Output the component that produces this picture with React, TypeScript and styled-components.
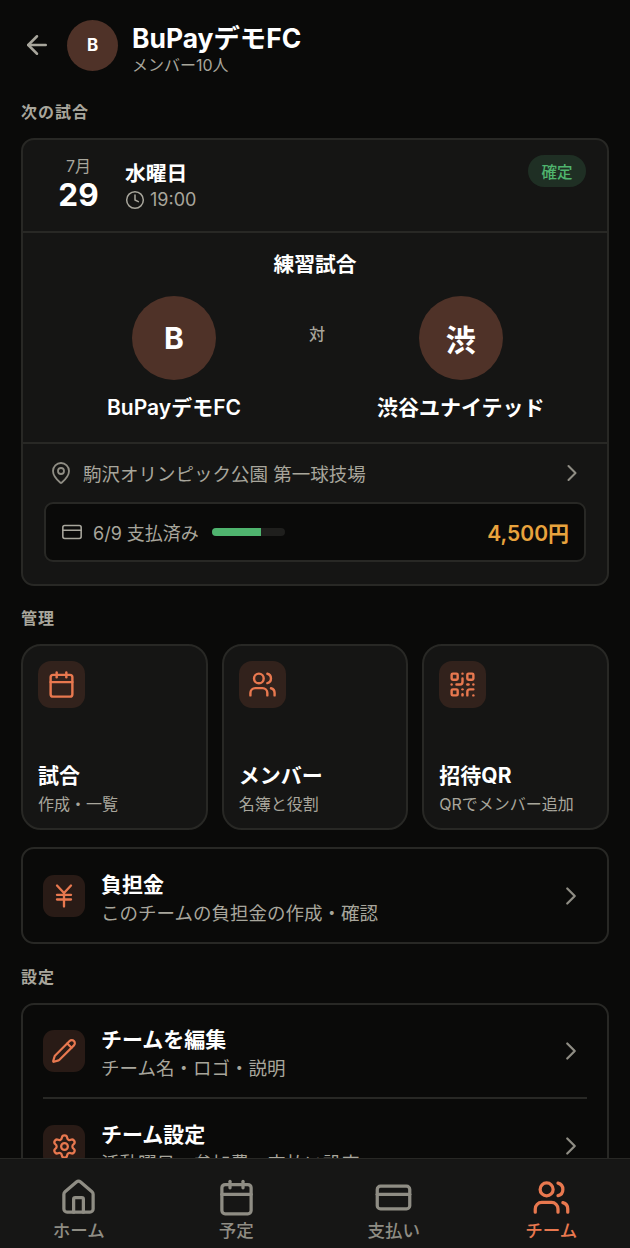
import React from "react";
import styled, { createGlobalStyle } from "styled-components";
import {
  ArrowLeft,
  Calendar,
  ChevronRight,
  Clock,
  CreditCard,
  House,
  JapaneseYen,
  MapPin,
  Pencil,
  QrCode,
  Settings,
  Users,
} from "lucide-react";

const GlobalStyle = createGlobalStyle`
  html, body {
    margin: 0;
    padding: 0;
    background: #0a0a09;
  }
  * {
    box-sizing: border-box;
  }
  body {
    font-family: Inter, "Noto Sans CJK JP", sans-serif;
  }
`;

const tiles = [
  { icon: Calendar, title: "試合", sub: "作成・一覧" },
  { icon: Users, title: "メンバー", sub: "名簿と役割" },
  { icon: QrCode, title: "招待QR", sub: "QRでメンバー追加" },
];

const navItems = [
  { icon: House, label: "ホーム" },
  { icon: Calendar, label: "予定" },
  { icon: CreditCard, label: "支払い" },
  { icon: Users, label: "チーム", active: true },
];

function App() {
  return (
    <Page>
      <GlobalStyle />
      <Scroll>
        <Header>
          <BackIcon>
            <ArrowLeft size={30} strokeWidth={2} />
          </BackIcon>
          <HeaderAvatar>B</HeaderAvatar>
          <HeaderText>
            <TeamName>BuPayデモFC</TeamName>
            <TeamMeta>メンバー10人</TeamMeta>
          </HeaderText>
        </Header>

        <SectionLabel>次の試合</SectionLabel>
        <MatchCard>
          <MatchTop>
            <DateBlock>
              <Month>7月</Month>
              <Day>29</Day>
            </DateBlock>
            <MatchWhen>
              <Weekday>水曜日</Weekday>
              <Time>
                <Clock size={20} strokeWidth={1.8} />
                19:00
              </Time>
            </MatchWhen>
            <Badge>確定</Badge>
          </MatchTop>
          <MatchMiddle>
            <MatchTitle>練習試合</MatchTitle>
            <Teams>
              <Team>
                <TeamAvatar>B</TeamAvatar>
                <TeamLabel>BuPayデモFC</TeamLabel>
              </Team>
              <Versus>対</Versus>
              <Team>
                <TeamAvatar>渋</TeamAvatar>
                <TeamLabel>渋谷ユナイテッド</TeamLabel>
              </Team>
            </Teams>
          </MatchMiddle>
          <MatchBottom>
            <Venue>
              <MapPin size={24} strokeWidth={1.8} />
              <VenueName>駒沢オリンピック公園 第一球技場</VenueName>
              <ChevronRight size={28} strokeWidth={1.8} />
            </Venue>
            <PayBox>
              <CreditCard size={22} strokeWidth={1.7} />
              <PayText>6/9 支払済み</PayText>
              <Progress>
                <ProgressFill style={{ width: `${(6 / 9) * 100}%` }} />
              </Progress>
              <Amount>4,500円</Amount>
            </PayBox>
          </MatchBottom>
        </MatchCard>

        <SectionLabel>管理</SectionLabel>
        <TileGrid>
          {tiles.map((t) => (
            <Tile key={t.title}>
              <TileIcon>
                <t.icon size={29} strokeWidth={2} />
              </TileIcon>
              <TileTitle>{t.title}</TileTitle>
              <TileSub>{t.sub}</TileSub>
            </Tile>
          ))}
        </TileGrid>

        <FeeCard>
          <RowIcon>
            <JapaneseYen size={28} strokeWidth={2} />
          </RowIcon>
          <RowText>
            <RowTitle>負担金</RowTitle>
            <RowSub>このチームの負担金の作成・確認</RowSub>
          </RowText>
          <RowChevron>
            <ChevronRight size={30} strokeWidth={1.8} />
          </RowChevron>
        </FeeCard>

        <SectionLabel>設定</SectionLabel>
        <SettingsCard>
          <SettingsRow>
            <RowIcon>
              <Pencil size={26} strokeWidth={2} />
            </RowIcon>
            <RowText>
              <RowTitle>チームを編集</RowTitle>
              <RowSub>チーム名・ロゴ・説明</RowSub>
            </RowText>
            <RowChevron>
              <ChevronRight size={30} strokeWidth={1.8} />
            </RowChevron>
          </SettingsRow>
          <SettingsRow>
            <RowIcon>
              <Settings size={27} strokeWidth={2} />
            </RowIcon>
            <RowText>
              <RowTitle>チーム設定</RowTitle>
              <RowSub>活動曜日・参加費・支払い設定</RowSub>
            </RowText>
            <RowChevron>
              <ChevronRight size={30} strokeWidth={1.8} />
            </RowChevron>
          </SettingsRow>
        </SettingsCard>
      </Scroll>

      <BottomNav>
        {navItems.map((n) => (
          <NavItem key={n.label} $active={n.active}>
            <n.icon size={39} strokeWidth={2} />
            <span>{n.label}</span>
          </NavItem>
        ))}
      </BottomNav>
    </Page>
  );
}

export default App;

const Page = styled.div`
  width: 630px;
  height: 1248px;
  display: flex;
  flex-direction: column;
  overflow: hidden;
  background: #0a0a09;
`;

const Scroll = styled.main`
  flex: 1;
  min-height: 0;
  overflow: hidden;
  padding: 19px 21px 0;
`;

const Header = styled.header`
  display: flex;
  align-items: center;
  height: 52px;
  margin-bottom: 30px;
`;

const BackIcon = styled.div`
  display: flex;
  width: 46px;
  margin-left: 1px;
  margin-right: -1px;
  color: #a8a69c;
`;

const HeaderAvatar = styled.div`
  width: 51px;
  height: 51px;
  border-radius: 50%;
  background: #4f3228;
  color: #fff;
  font-size: 17px;
  font-weight: 700;
  display: flex;
  align-items: center;
  justify-content: center;
`;

const HeaderText = styled.div`
  margin-left: 14px;
  padding-top: 8px;
  display: flex;
  flex-direction: column;
`;

const TeamName = styled.div`
  color: #fff;
  font-size: 26.4px;
  font-weight: 700;
  line-height: 32px;
`;

const TeamMeta = styled.div`
  color: #a8a69c;
  font-size: 16px;
  line-height: 22px;
`;

const SectionLabel = styled.div`
  color: #a8a69c;
  font-size: 16px;
  font-weight: 700;
  line-height: 22px;
  letter-spacing: 1px;
  margin-bottom: 15px;
`;

const MatchCard = styled.section`
  background: #151514;
  border: 2px solid #282825;
  border-radius: 13px;
  margin-bottom: 21px;
`;

const MatchTop = styled.div`
  height: 93px;
  display: flex;
  align-items: flex-start;
  padding: 15px 21px 0 0;
  border-bottom: 2px solid #282825;
`;

const DateBlock = styled.div`
  width: 102px;
  display: flex;
  flex-direction: column;
  align-items: center;
  padding-left: 9px;
`;

const Month = styled.div`
  color: #a8a69c;
  font-size: 16px;
  line-height: 22px;
`;

const Day = styled.div`
  color: #fff;
  font-size: 31.5px;
  font-weight: 700;
  line-height: 36px;
`;

const MatchWhen = styled.div`
  flex: 1;
  display: flex;
  flex-direction: column;
  padding-top: 5px;
`;

const Weekday = styled.div`
  color: #fff;
  font-size: 20.8px;
  font-weight: 700;
  line-height: 27px;
`;

const Time = styled.div`
  display: flex;
  align-items: center;
  gap: 5px;
  color: #a8a69c;
  font-size: 18px;
  line-height: 26px;
`;

const Badge = styled.div`
  width: 58px;
  height: 32px;
  border-radius: 16px;
  background: #1f2f24;
  color: #4fb46e;
  font-size: 15.5px;
  font-weight: 500;
  display: flex;
  align-items: center;
  justify-content: center;
`;

const MatchMiddle = styled.div`
  height: 211px;
  padding-top: 18px;
  border-bottom: 2px solid #282825;
`;

const MatchTitle = styled.div`
  color: #fff;
  font-size: 20.8px;
  font-weight: 700;
  line-height: 28px;
  text-align: center;
`;

const Teams = styled.div`
  display: flex;
  align-items: flex-start;
  padding-left: 84px;
  margin-top: 17px;
`;

const Team = styled.div`
  display: flex;
  flex-direction: column;
  align-items: center;
`;

const TeamAvatar = styled.div`
  width: 84px;
  height: 84px;
  border-radius: 50%;
  background: #4f3228;
  color: #fff;
  font-size: 30px;
  font-weight: 700;
  display: flex;
  align-items: center;
  justify-content: center;
`;

const TeamLabel = styled.div`
  color: #fff;
  font-size: 21px;
  font-weight: 600;
  line-height: 30px;
  margin-top: 13px;
`;

const Versus = styled.div`
  color: #a8a69c;
  font-size: 16px;
  font-weight: 500;
  line-height: 22px;
  margin: 27px 52px 0 68px;
`;

const MatchBottom = styled.div`
  padding: 0 21px 22px;
`;

const Venue = styled.div`
  height: 58px;
  display: flex;
  align-items: center;
  color: #8f8d84;
  padding-left: 5px;
`;

const VenueName = styled.div`
  flex: 1;
  color: #a8a69c;
  font-size: 18.5px;
  margin-left: 10px;
`;

const PayBox = styled.div`
  height: 60px;
  display: flex;
  align-items: center;
  background: #0a0a09;
  border: 2px solid #282825;
  border-radius: 9px;
  padding: 0 15px;
  color: #a8a69c;
`;

const PayText = styled.div`
  font-size: 18px;
  margin-left: 10px;
`;

const Progress = styled.div`
  width: 73px;
  height: 8px;
  border-radius: 4px;
  background: #1f1f1d;
  margin-left: 13px;
  overflow: hidden;
`;

const ProgressFill = styled.div`
  height: 100%;
  background: #4fb46e;
`;

const Amount = styled.div`
  margin-left: auto;
  color: #e8a33d;
  font-size: 21px;
  font-weight: 600;
`;

const TileGrid = styled.div`
  display: grid;
  grid-template-columns: repeat(3, 1fr);
  gap: 14px;
  margin-bottom: 17px;
`;

const Tile = styled.div`
  height: 186px;
  background: #151514;
  border: 2px solid #282825;
  border-radius: 20px;
  padding: 15px 15px 0 15px;
`;

const TileIcon = styled.div`
  width: 47px;
  height: 47px;
  border-radius: 13px;
  background: #32221c;
  color: #e8784f;
  display: flex;
  align-items: center;
  justify-content: center;
  margin-bottom: 54px;
`;

const TileTitle = styled.div`
  color: #fff;
  font-size: 21px;
  font-weight: 700;
  line-height: 28px;
`;

const TileSub = styled.div`
  color: #a8a69c;
  font-size: 16px;
  line-height: 22px;
  margin-top: 3px;
  white-space: nowrap;
`;

const RowIcon = styled.div`
  width: 42px;
  height: 42px;
  flex: none;
  border-radius: 11px;
  background: #291b16;
  color: #e8784f;
  display: flex;
  align-items: center;
  justify-content: center;
`;

const RowText = styled.div`
  flex: 1;
  margin-left: 16px;
  padding-top: 5px;
  display: flex;
  flex-direction: column;
`;

const RowTitle = styled.div`
  color: #fff;
  font-size: 21px;
  font-weight: 700;
  line-height: 28px;
`;

const RowSub = styled.div`
  color: #a8a69c;
  font-size: 18.5px;
  line-height: 26px;
  margin-top: 1px;
  white-space: nowrap;
`;

const RowChevron = styled.div`
  display: flex;
  color: #8f8d84;
  margin-right: 1px;
`;

const FeeCard = styled.div`
  height: 97px;
  display: flex;
  align-items: center;
  border: 2px solid #282825;
  border-radius: 13px;
  padding: 0 20px;
  margin-bottom: 22px;
`;

const SettingsCard = styled.div`
  border: 2px solid #282825;
  border-radius: 13px;
  padding: 0 20px;
`;

const SettingsRow = styled.div`
  height: 94px;
  display: flex;
  align-items: center;
  border-bottom: 2px solid #282825;
  &:last-child {
    border-bottom: none;
  }
`;

const BottomNav = styled.nav`
  height: 90px;
  flex: none;
  display: grid;
  grid-template-columns: repeat(4, 1fr);
  background: #161615;
  border-top: 1px solid #282825;
`;

const NavItem = styled.div<{ $active?: boolean }>`
  display: flex;
  flex-direction: column;
  align-items: center;
  padding-top: 19px;
  color: ${(p) => (p.$active ? "#e8784f" : "#8f8d84")};
  font-size: 17.5px;
  font-weight: 500;
  line-height: 22px;

  span {
    margin-top: 3px;
  }
`;
